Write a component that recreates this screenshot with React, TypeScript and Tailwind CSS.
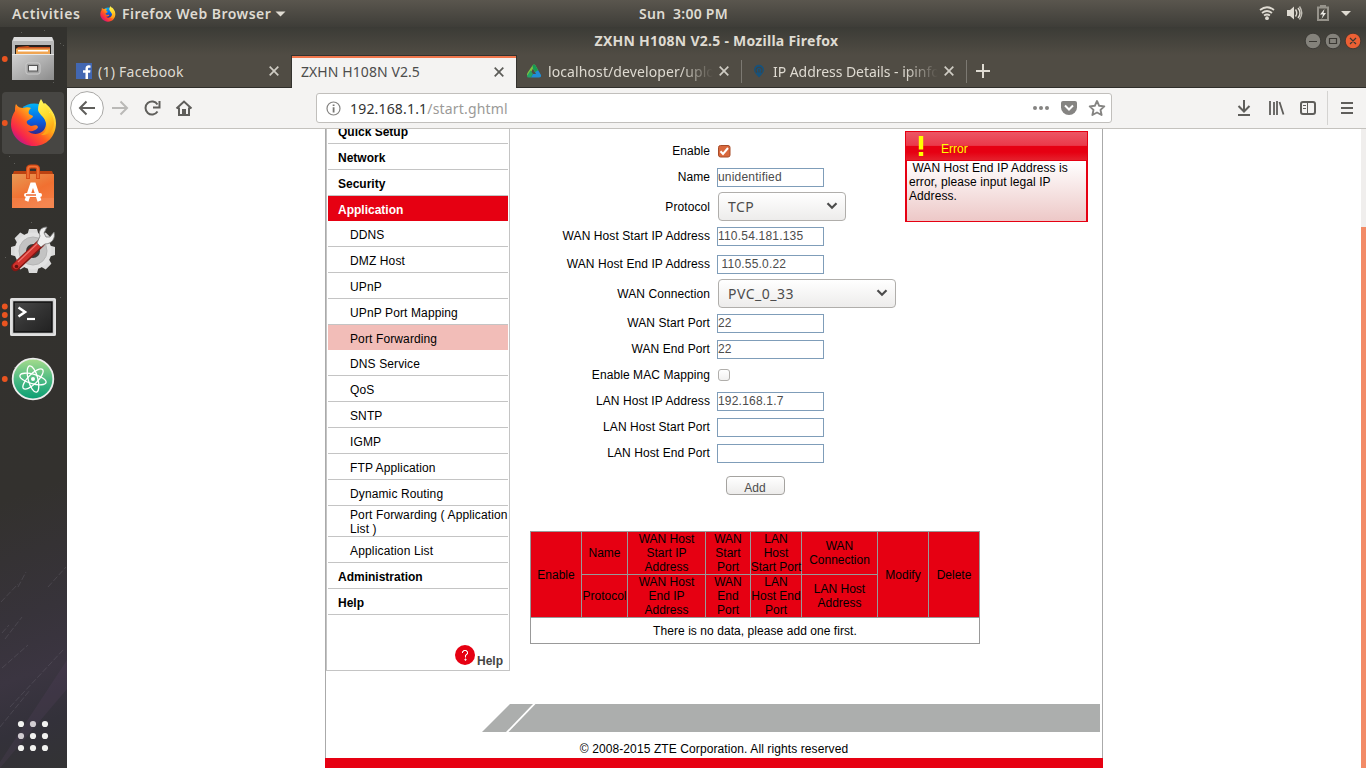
import React from "react";

const UI = "font-['Noto_Sans',sans-serif]";

function Flame() {
  return (
    <>
      <defs>
        <linearGradient id="fxBody" x1="0.9" y1="0.1" x2="0.15" y2="0.9">
          <stop offset="0" stopColor="#fff44f" />
          <stop offset="0.35" stopColor="#ffb018" />
          <stop offset="0.6" stopColor="#ff5a22" />
          <stop offset="0.85" stopColor="#f5234f" />
          <stop offset="1" stopColor="#b8198e" />
        </linearGradient>
        <linearGradient id="fxGlobe" x1="0.5" y1="0" x2="0.5" y2="1">
          <stop offset="0" stopColor="#00b4f8" />
          <stop offset="0.5" stopColor="#0a5fe0" />
          <stop offset="1" stopColor="#3a1673" />
        </linearGradient>
        <linearGradient id="fxTail" x1="0.3" y1="0" x2="0.6" y2="1">
          <stop offset="0" stopColor="#fff65a" />
          <stop offset="0.5" stopColor="#ffd92a" />
          <stop offset="1" stopColor="#ff9a12" />
        </linearGradient>
      </defs>
      <circle cx="23" cy="22" r="17.5" fill="url(#fxGlobe)" />
      <path
        d="M5 5C7 8 9 9 12 9C15 8 18 8 20 9C18 11 17 13 18 15L22 17C22 19 19 20 16 22C15 24 17 26 20 27C24 27 25 25 27 28C26 31 21 33 17 32C22 37 34 36 35 25C35 18 28 14 28 8L34 4C40 9 45 16 45 24C45 37 36 47 23 47C10 47 0 37 0 25C0 19 2 15 4 12C4 9 4 7 5 5Z"
        fill="url(#fxBody)"
      />
      <path
        d="M30 0C28 3 27 7 27 11C28 16 35 18 36 27C36 31 33 35 30 36C38 37 43 30 43 24C43 14 35 10 30 0Z"
        fill="url(#fxTail)"
      />
    </>
  );
}

function Tile({ dots = 0, active = false, children }: { dots?: number; active?: boolean; children: React.ReactNode }) {
  const ys = dots === 3 ? [23.5, 32, 40.5] : dots === 1 ? [32] : [];
  return (
    <svg width="67" height="64" viewBox="0 0 67 64" className="block shrink-0">
      {active && <rect x="2" y="1" width="62" height="62" rx="4" fill="#ffffff" fillOpacity="0.1" />}
      {ys.map((y) => (
        <circle key={y} cx="4.8" cy={y} r="2.9" fill="#e95420" />
      ))}
      {children}
    </svg>
  );
}

function Dock() {
  return (
    <aside className="relative flex w-[67px] shrink-0 flex-col bg-[linear-gradient(160deg,#33322e_0%,#33312e_62%,#37333a_78%,#3b3541_86%,#33313a_93%,#333334_100%)]">
      <svg className="absolute left-0 top-0" width="67" height="741" viewBox="0 0 67 741">
        <g stroke="#7b7680" strokeOpacity="0.28" strokeWidth="1" strokeDasharray="6 2">
          <path d="M5 612L22 590M2 606L9 598M18 560L26 545M2 641L28 618M10 680L64 622" />
          <path d="M1 575L18 557M48 560L66 540M0 700L30 663" />
        </g>
        <path d="M0 735L67 633V662L0 741Z" fill="#5c4666" fillOpacity="0.22" />
        <g fill="#fff" fillOpacity="0.22">
          <path d="M21 5h1v1h-1zM44 3h1v1h-1zM60 16h1v1h-1zM63 18h1v1h-1zM53 55h1v1h-1zM14 136h1v1h-1zM9 129h1v1h-1zM49 85h1v1h-1zM31 195h1v1h-1zM5 230h1v1h-1zM60 270h1v1h-1zM14 340h1v1h-1z" />
        </g>
      </svg>
      <Tile dots={1}>
        <defs>
          <linearGradient id="cab" x1="0" y1="0" x2="1" y2="1">
            <stop offset="0" stopColor="#d2d2d2" />
            <stop offset="0.5" stopColor="#b0b0b0" />
            <stop offset="1" stopColor="#8b8b8b" />
          </linearGradient>
        </defs>
        <path d="M14 10H52L54 14V53H12V14Z" fill="#b9b9b9" />
        <path d="M14 10H52L53 14H13Z" fill="#dcdcdc" />
        <rect x="15" y="18" width="36" height="11" fill="#26221f" />
        <path d="M18 20L28 19L30 20H50V28H17V21Z" fill="#c74e1c" />
        <rect x="16" y="21.500" width="34" height="6" fill="#f0a552" />
        <rect x="18" y="23" width="30" height="1.500" fill="#fff" />
        <path d="M12 27H54V53H12Z" fill="url(#cab)" />
        <path d="M12 27.500H54" stroke="#e8e8e8" />
        <rect x="26" y="36" width="14" height="11" rx="2" fill="#a1a1a1" stroke="#cdcdcd" />
        <rect x="28.500" y="38.500" width="9" height="5.500" fill="#f3f3f3" stroke="#555" />
      </Tile>
      <Tile dots={1} active>
        <g transform="translate(11 8)">
          <Flame />
        </g>
      </Tile>
      <Tile>
        <defs>
          <linearGradient id="bag" x1="0" y1="0" x2="0.6" y2="1">
            <stop offset="0" stopColor="#e79a55" />
            <stop offset="0.6" stopColor="#f17031" />
            <stop offset="1" stopColor="#f57c42" />
          </linearGradient>
        </defs>
        <path d="M14 16H52L54 21H12Z" fill="#bb4211" />
        <path d="M12 19H54V53H12Z" fill="url(#bag)" />
        <path d="M12 43H54V53H12Z" fill="#fff" fillOpacity="0.08" />
        <path d="M28 24V14Q28 11.500 31 11.500H35Q38 11.500 38 14V24" fill="none" stroke="#d64b16" strokeWidth="4" />
        <path d="M28 23V14Q28 11.500 31 11.500H35Q38 11.500 38 14V23" fill="none" stroke="#f07438" strokeWidth="1.600" />
        <path d="M26.500 46L32 29.500H34L39.500 46" fill="none" stroke="#fff" strokeWidth="4" />
        <rect x="24" y="38" width="18" height="4" rx="2" fill="#fff" />
        <path d="M26 40H36" stroke="#ec6a32" strokeWidth="1.500" />
      </Tile>
      <Tile>
        <g transform="translate(33 32)">
          {[0, 45, 90, 135].map((a) => (
            <path key={a} transform={`rotate(${a})`} d="M-4 -22H4L6 -15V15L4 22H-4L-6 15V-15Z" fill="#dadada" />
          ))}
          <circle r="18.500" fill="#e2e2e2" />
          <circle r="14" fill="#c3c3c3" stroke="#b5b5b5" />
          <circle r="7" fill="#3a3937" />
        </g>
        <path d="M15.500 48L41 24" stroke="#821713" strokeWidth="8.500" strokeLinecap="round" />
        <path d="M16 47L41 23.500" stroke="#cf322d" strokeWidth="6.200" strokeLinecap="round" />
        <path d="M18 43L38 24" stroke="#ef7670" strokeWidth="1.200" />
        <circle cx="16.500" cy="47.500" r="1.800" fill="#641310" />
        <path d="M37 24L40 17C38 12 41 8 47 8L44 14L46 18L50 18L54 13C56 20 51 25 45 25L41 28Z" fill="#eee" stroke="#777" strokeWidth="0.800" />
      </Tile>
      <Tile dots={3}>
        <defs>
          <linearGradient id="term" x1="0" y1="0" x2="1" y2="1">
            <stop offset="0" stopColor="#4a4a4a" />
            <stop offset="0.500" stopColor="#333" />
            <stop offset="1" stopColor="#212121" />
          </linearGradient>
        </defs>
        <rect x="10" y="15" width="46" height="38" rx="1.500" fill="#d0d0d0" />
        <rect x="11" y="16" width="44" height="36" rx="1" fill="none" stroke="#efefef" />
        <rect x="14" y="19" width="38" height="30" fill="url(#term)" stroke="#111" strokeWidth="1.500" />
        <path d="M18.500 24.500L25 29L18.500 33.500" fill="none" stroke="#fff" strokeWidth="2.600" />
        <path d="M27 36H35" stroke="#fff" strokeWidth="2.200" />
      </Tile>
      <Tile dots={1}>
        <defs>
          <linearGradient id="atom" x1="0" y1="0" x2="0" y2="1">
            <stop offset="0" stopColor="#a6dc8c" />
            <stop offset="0.550" stopColor="#47b983" />
            <stop offset="1" stopColor="#0a9d72" />
          </linearGradient>
        </defs>
        <circle cx="33" cy="32" r="20.300" fill="url(#atom)" stroke="#ededed" strokeWidth="1.800" />
        <g fill="none" stroke="#fff" strokeWidth="1.300" transform="translate(33 32)">
          <ellipse rx="13.500" ry="4.800" transform="rotate(15)" />
          <ellipse rx="13.500" ry="4.800" transform="rotate(75)" />
          <ellipse rx="13.500" ry="4.800" transform="rotate(135)" />
        </g>
        <circle cx="33" cy="32" r="2" fill="#fff" />
      </Tile>
      <svg className="mb-[15px] ml-[16px] mt-auto block" width="34" height="34" viewBox="0 0 34 34">
        {[5, 17, 29].map((y) => [5, 17, 29].map((x) => <circle key={`${x}-${y}`} cx={x} cy={y} r="3.100" fill="#f2f2f0" />))}
      </svg>
    </aside>
  );
}

function TopBar() {
  return (
    <header className={`${UI} grid h-[27px] shrink-0 grid-cols-[583px_201px_1fr] items-center bg-[linear-gradient(#5a564e,#3e3d38)] text-[14px] font-semibold leading-[27px] text-[#dfdbd2]`}>
      <div className="flex items-center whitespace-nowrap pl-[12px]">
        <span className="w-[88px] tracking-[0.6px]">Activities</span>
        <svg width="16" height="16" viewBox="0 0 46 48" className="mr-[6px]">
          <Flame />
        </svg>
        <span className="w-[153px] tracking-[0.47px]">Firefox Web Browser</span>
        <svg width="11" height="6" viewBox="0 0 11 6"><path d="M0.500 0.500H10.500L5.500 5.500Z" fill="#dfdbd2" /></svg>
      </div>
      <div className="whitespace-pre text-center tracking-[0.25px]">Sun  3:00 PM</div>
      <svg className="justify-self-end" width="114" height="27" viewBox="1252 0 114 27">
        <g fill="none" stroke="#dfdbd2" strokeWidth="1.800">
          <path d="M1260 10Q1267 4.500 1274 10" />
          <path d="M1262 13Q1267 9 1272 13" />
          <path d="M1264 15.500Q1267 13.500 1270 15.500" />
          <path d="M1295.500 9.500Q1298 13 1295.500 16.500M1298 8Q1302 13 1298 18" strokeWidth="1.400" />
          <path d="M1299.500 6.500Q1304 13 1299.500 19.500" strokeOpacity="0.800" strokeWidth="1.400" />
        </g>
        <circle cx="1267" cy="18.200" r="1.900" fill="#dfdbd2" />
        <path d="M1287 10H1290L1294 6.500V19.500L1290 16H1287Z" fill="#dfdbd2" />
        <path d="M1318 7.500H1328V20H1318ZM1321 7V6H1325V7" fill="none" stroke="#96938b" strokeWidth="2" />
        <path d="M1324.500 9L1320 14.500H1323L1321.500 19L1326 13H1323.500Z" fill="#eceae5" />
        <path d="M1341 11H1351L1346 16Z" fill="#dfdbd2" />
      </svg>
    </header>
  );
}

function Close({ dark = false }: { dark?: boolean }) {
  return (
    <svg width="10" height="10" viewBox="0 0 10 10" className="shrink-0">
      <path d="M0.700 0.700L9.300 9.300M9.300 0.700L0.700 9.300" stroke={dark ? "#5c5c58" : "#cfccc4"} strokeWidth="1.700" />
    </svg>
  );
}

function Chrome() {
  return (
    <>
      <div className={`${UI} grid h-[28px] shrink-0 grid-cols-[1fr_300px_1fr] items-center bg-[linear-gradient(#3b3b36,#504c44)] text-[14px] font-bold leading-[28px] text-[#dfdbd2]`}>
        <span />
        <span className="whitespace-nowrap text-center tracking-[0.26px]">ZXHN H108N V2.5 - Mozilla Firefox</span>
        <svg className="justify-self-end" width="64" height="28" viewBox="1302 27 64 28">
          <circle cx="1313" cy="41" r="7.800" fill="#84827b" stroke="#33322e" strokeWidth="0.800" />
          <circle cx="1333" cy="41" r="7.800" fill="#84827b" stroke="#33322e" strokeWidth="0.800" />
          <circle cx="1353" cy="41" r="7.800" fill="#ec6034" stroke="#33322e" strokeWidth="0.800" />
          <path d="M1309 41.500H1317M1329.500 38.500H1336.500V43.500H1329.500ZM1350 38L1356 44M1356 38L1350 44" fill="none" stroke="#3a3833" strokeWidth="1.200" />
        </svg>
      </div>

      <div className={`${UI} flex h-[33px] shrink-0 bg-[#504c44] text-[14px] leading-[33px] text-[#dfdbd2]`}>
        <div className="flex w-[224px] items-center border-b border-[#2f2e2a] pl-[9px] pr-[12px]">
          <svg width="16" height="16" viewBox="0 0 16 16" className="mr-[6px]">
            <rect width="16" height="16" fill="#4267b2" />
            <path d="M9.500 16V9.800H7V7.300H9.500V5.500C9.500 3.200 11 2.300 12.700 2.300L14.500 2.400V4.700H13.300C12.200 4.700 12 5.200 12 6V7.300H14.500L14.100 9.800H12V16Z" fill="#fff" />
          </svg>
          <span className="grow tracking-[0.25px]">(1) Facebook</span>
          <Close />
        </div>
        <div className="flex w-[226px] items-center border-x border-t border-[#33322e] bg-[#f4f3f2] pl-[9px] pr-[12px] leading-[30px] text-[#4c4c4c] shadow-[inset_0_2px_0_#f0764c]">
          <span className="grow tracking-[0.08px]">ZXHN H108N V2.5</span>
          <Close dark />
        </div>
        <div className="flex grow items-center border-b border-[#2f2e2a] pl-[9px]">
          <svg width="16" height="16" viewBox="0 0 16 16" className="mr-[6px] shrink-0">
            <path d="M6.500 2.500Q8 0.500 9.500 2.500L12 7L9 9L7 5.500L4 11L1 13Q0.500 11 2 9Z" fill="#7bc243" />
            <path d="M1 13L4.500 7.500L7 11L5 14.500H2.500Q1 14.500 1 13Z" fill="#23a566" />
            <path d="M9 9L12 7L15 12Q15.500 14.500 13 14.500H5L7 11H10Z" fill="#1f8dd6" />
            <path d="M6.500 2.500Q8 0.500 9.500 2.500L12 7L9 9L7 5.500Z" fill="#159b55" />
          </svg>
          <span className="w-[166px] overflow-hidden whitespace-nowrap tracking-[0.1px] [mask-image:linear-gradient(to_right,#000_132px,transparent_165px)]">localhost/developer/upload</span>
          <span className="ml-[5px] flex"><Close /></span>
          <span className="ml-[12px] h-[23px] w-px bg-[#7c7972]" />
          <svg width="12" height="14" viewBox="0 0 12 14" className="ml-[11px] mr-[8px] shrink-0">
            <path d="M6 13.500C3 10 1 8.500 1 5.800A5 5 0 0 1 11 5.800C11 8.500 9 10 6 13.500Z" fill="#16527c" />
            <path d="M4 8.500A3 3 0 1 1 8 8.500M6 5V8.500" fill="none" stroke="#45433d" strokeWidth="1.200" />
          </svg>
          <span className="w-[165px] overflow-hidden whitespace-nowrap tracking-[-0.05px] [mask-image:linear-gradient(to_right,#000_132px,transparent_165px)]">IP Address Details - ipinfo</span>
          <span className="ml-[6px] flex"><Close /></span>
          <span className="ml-[12px] h-[23px] w-px bg-[#7c7972]" />
          <svg width="14" height="14" viewBox="0 0 14 14" className="ml-[9px]"><path d="M7 0V14M0 7H14" stroke="#dfdbd2" strokeWidth="2" /></svg>
        </div>
      </div>

      <div className="flex h-[41px] shrink-0 items-start border-b border-[#c4c2be] bg-[#f4f3f2] pt-[3px]">
        <svg width="240" height="34" viewBox="67 91 240 34" className="mr-[9px] shrink-0" fill="none" stroke="#5f5e5b" strokeWidth="2">
          <circle cx="87" cy="108" r="16.400" fill="#fff" stroke="#a9a8a6" strokeWidth="1" />
          <path d="M95 108H80M86.500 101.500L80 108L86.500 114.500" />
          <path d="M112 108H127M120.500 101.500L127 108L120.500 114.500" stroke="#bab9b7" />
          <path d="M157.500 104.500A6.500 6.500 0 1 0 157.500 111.500" />
          <path d="M159.500 101V107.500H153" fill="none" />
          <path d="M176.500 108.500L184 101.500L191.500 108.500M179 107.500V115H189V107.500M183 115V110H185V115" />
        </svg>
        <div className={`${UI} mt-[2px] flex h-[30px] w-[796px] shrink-0 items-center rounded-[3px] border border-[#c1bfbc] bg-white pl-[9px] text-[14px] leading-[28px] text-[#9b9a98]`}>
          <svg width="15" height="15" viewBox="0 0 15 15" className="mr-[9px]">
            <circle cx="7.500" cy="7.500" r="6.500" fill="none" stroke="#858482" strokeWidth="1.200" />
            <path d="M6.700 3.500H8.500V5H6.700ZM6.700 6.300H8.500V11.500H6.700Z" fill="#777673" />
          </svg>
          <span className="grow pt-px tracking-[0.18px]"><span className="text-[#333]">192.168.1.1</span>/start.ghtml</span>
          <svg width="83" height="20" viewBox="1028 98 83 20">
            <g fill="#858482"><circle cx="1035" cy="108" r="2" /><circle cx="1041" cy="108" r="2" /><circle cx="1047" cy="108" r="2" /></g>
            <path d="M1063 101H1075Q1077 101 1077 103V107.500A8 7.500 0 0 1 1061 107.500V103Q1061 101 1063 101Z" fill="#858482" />
            <path d="M1065 105.500L1069 109.500L1073 105.500" fill="none" stroke="#fff" strokeWidth="2" />
            <path d="M1097 101L1099.200 105.800L1104.300 106.400L1100.500 109.900L1101.600 115L1097 112.500L1092.400 115L1093.500 109.900L1089.700 106.400L1094.800 105.800Z" fill="none" stroke="#858482" strokeWidth="1.900" strokeLinejoin="round" />
          </svg>
        </div>
        <svg className="ml-auto" width="136" height="34" viewBox="1230 91 136 34" fill="none" stroke="#5f5e5b" strokeWidth="2">
          <path d="M1244 100V111.500M1238.500 106L1244 111.500L1249.500 106M1238 115H1250" />
          <path d="M1270 101V115M1274 102V115M1277 101V115M1279.500 102L1283.500 114.500" strokeWidth="1.800" />
          <rect x="1301" y="102" width="14" height="12" rx="2" />
          <path d="M1307.500 102V114" strokeWidth="1" />
          <path d="M1303 105.500H1306M1303 108.500H1306" strokeWidth="1" />
          <path d="M1327.500 91V125" stroke="#d4d3d1" strokeWidth="1" />
          <path d="M1341 103H1353M1341 108H1353M1341 113H1353" />
        </svg>
      </div>
    </>
  );
}

const subTop = ["DDNS", "DMZ Host", "UPnP", "UPnP Port Mapping", "Port Forwarding", "DNS Service", "QoS", "SNTP", "IGMP", "FTP Application", "Dynamic Routing"];

function MainItem({ label }: { label: string }) {
  return <div className="h-[26px] border-b border-[#c4c4c4] pl-[10px] pt-[7px] font-bold">{label}</div>;
}

function Menu() {
  return (
    <nav className="flex h-[542px] w-[184px] shrink-0 flex-col border-x border-b border-[#c4c4c4] px-px">
      <div className="flex h-[15px] flex-col justify-end overflow-hidden">
        <div className="shrink-0"><MainItem label="Quick Setup" /></div>
      </div>
      <MainItem label="Network" />
      <MainItem label="Security" />
      <div className="h-[25px] bg-[#e60012] pl-[10px] pt-[7px] font-bold text-white">Application</div>
      {subTop.map((s) =>
        s === "Port Forwarding" ? (
          <div key={s} className="h-[25px] bg-[#f2bdb8] pl-[22px] pt-[7px] tracking-[0.12px]">{s}</div>
        ) : (
          <div key={s} className="h-[26px] border-b border-[#c4c4c4] pl-[22px] pt-[7px] tracking-[0.12px]">{s}</div>
        ),
      )}
      <div className="h-[31px] whitespace-nowrap border-b border-[#c4c4c4] pl-[22px] pt-[2px] tracking-[0.12px]">Port Forwarding ( Application<br />List )</div>
      <div className="h-[26px] border-b border-[#c4c4c4] pl-[22px] pt-[7px] tracking-[0.16px]">Application List</div>
      <MainItem label="Administration" />
      <MainItem label="Help" />
      <div className="mt-[30px] flex justify-end pr-[5px]">
        <svg width="20" height="20" viewBox="0 0 20 20" className="mr-[2px]">
          <circle cx="10" cy="10" r="10" fill="#e60012" />
          <path d="M7.500 8V6.500H8.500V5.500H11.500V6.500H12.500V9H11.500V10H10.500V12.500M10 14H11V15.200H10Z" fill="none" stroke="#fff" strokeWidth="1" />
        </svg>
        <span className="mt-[9px] font-bold text-[#444]">Help</span>
      </div>
    </nav>
  );
}

function Row({ label, h = "h-[26px]", top = "pt-[6px]", children }: { label: string; h?: string; top?: string; children: React.ReactNode }) {
  return (
    <div className={`flex items-start ${h}`}>
      <label className={`w-[200px] whitespace-nowrap text-right tracking-[0.08px] ${top}`}>{label}</label>
      {children}
    </div>
  );
}

function Field({ value = "" }: { value?: string }) {
  return <div className="ml-[7px] mt-[4px] h-[19px] w-[107px] whitespace-pre border border-[#7f9db9] bg-white pt-px tracking-[0.2px] text-[#4c4c4c]">{value}</div>;
}

function Picker({ value, className }: { value: string; className: string }) {
  return (
    <div className={`${UI} ml-[8px] flex h-[29px] items-center justify-between rounded-[4px] border border-[#b0aeab] bg-[linear-gradient(#ffffff,#edeceb)] pl-[9px] pr-[7px] text-[14px] leading-[27px] tracking-[0.5px] text-[#4c4c4c] ${className}`}>
      <span>{value}</span>
      <svg width="12" height="8" viewBox="0 0 12 8" className="mb-[2px]"><path d="M1.500 1.200L6 5.700L10.500 1.200" fill="none" stroke="#4c4c4c" strokeWidth="2.200" /></svg>
    </div>
  );
}

function Form() {
  return (
    <form className="mt-[9px] w-[395px]">
      <Row label="Enable">
        <svg width="13" height="13" viewBox="0 0 13 13" className="ml-[8px] mt-[7px]">
          <rect x="0.500" y="0.500" width="11.500" height="11.500" rx="2" fill="#d9683c" stroke="#a74c29" />
          <path d="M2.500 6.300L5 9L10 3" fill="none" stroke="#fff" strokeWidth="2" />
        </svg>
      </Row>
      <Row label="Name"><Field value="unidentified" /></Row>
      <Row label="Protocol" h="h-[33px]" top="pt-[10px]"><Picker value="TCP" className="mt-[2px] w-[128px]" /></Row>
      <Row label="WAN Host Start IP Address" h="h-[28px]"><Field value="110.54.181.135" /></Row>
      <Row label="WAN Host End IP Address" h="h-[27px]"><Field value=" 110.55.0.22" /></Row>
      <Row label="WAN Connection" h="h-[32px]" top="pt-[9px]"><Picker value="PVC_0_33" className="mt-[1px] w-[178px]" /></Row>
      <Row label="WAN Start Port"><Field value="22" /></Row>
      <Row label="WAN End Port"><Field value="22" /></Row>
      <Row label="Enable MAC Mapping">
        <span className="ml-[8px] mt-[7px] h-[12px] w-[12px] rounded-[3px] border border-[#b0aeab] bg-[linear-gradient(#ffffff,#f2f1f0)]" />
      </Row>
      <Row label="LAN Host IP Address"><Field value="192.168.1.7" /></Row>
      <Row label="LAN Host Start Port"><Field /></Row>
      <Row label="LAN Host End Port"><Field /></Row>
      <div className="ml-[216px] mt-[10px] h-[19px] w-[59px] overflow-hidden rounded-[4px] border border-[#a5a3a0] bg-[linear-gradient(#ffffff,#edeceb)] pr-px pt-[4px] text-center text-[#4c4c4c]">Add</div>
    </form>
  );
}

function Head({ lines, className = "" }: { lines: string[]; className?: string }) {
  return (
    <div className={`flex flex-col items-center justify-center whitespace-nowrap bg-[#e60012] text-center ${className}`}>
      {lines.map((l) => <span key={l}>{l}</span>)}
    </div>
  );
}

function Rules() {
  return (
    <div className="ml-[20px] mt-[36px] grid w-[450px] grid-cols-[50px_45px_77px_44px_50px_75px_50px_50px] grid-rows-[42px_42px_25px] gap-px bg-[#999] p-px">
      <Head lines={["Enable"]} className="row-span-2" />
      <Head lines={["Name"]} />
      <Head lines={["WAN Host", "Start IP", "Address"]} />
      <Head lines={["WAN", "Start", "Port"]} />
      <Head lines={["LAN", "Host", "Start Port"]} />
      <Head lines={["WAN", "Connection"]} />
      <Head lines={["Modify"]} className="row-span-2" />
      <Head lines={["Delete"]} className="row-span-2" />
      <Head lines={["Protocol"]} />
      <Head lines={["WAN Host", "End IP", "Address"]} />
      <Head lines={["WAN", "End", "Port"]} />
      <Head lines={["LAN", "Host End", "Port"]} />
      <Head lines={["LAN Host", "Address"]} />
      <div className="col-span-8 bg-white pt-[6px] text-center tracking-[0.06px]">There is no data, please add one first.</div>
    </div>
  );
}

function ErrorBox() {
  return (
    <section className="mt-[2px] h-[91px] w-[183px] shrink-0 border border-[#e60012]">
      <div className="flex h-[28px] items-start bg-[linear-gradient(#ec5664_0%,#ea3a4a_48%,#e60012_50%,#e60012_72%,#e5202c_100%)] text-[#ffff00]">
        <svg width="6" height="20" viewBox="0 0 6 20" className="ml-[12px] mt-[4px]"><path d="M0.800 0H5.200V13.500H0.800ZM0.800 16H5.200V20H0.800Z" fill="#ffff00" /></svg>
        <span className="ml-[17px] mt-[10px]">Error</span>
      </div>
      <div className="h-[61px] whitespace-pre border-x border-t border-[#e60012] bg-[linear-gradient(#ffffff,#edc8c7)] pl-[2px] tracking-[0.08px]">{" WAN Host End IP Address is\nerror, please input legal IP\nAddress."}</div>
    </section>
  );
}

export default function App() {
  return (
    <div className="flex h-[768px] w-[1366px] flex-col overflow-hidden bg-white">
      <TopBar />
      <div className="flex min-h-0 grow">
        <Dock />
        <div className="flex min-w-0 grow flex-col">
          <Chrome />
          <div className="flex min-h-0 grow font-['Liberation_Sans',Arial,sans-serif] text-[12px] leading-[14px] text-black">
            <main className="ml-[258px] flex w-[778px] shrink-0 flex-col border-x border-[#aaa]">
              <div className="flex">
                <Menu />
                <div>
                  <div className="flex">
                    <Form />
                    <ErrorBox />
                  </div>
                  <Rules />
                </div>
              </div>
              <svg width="618" height="28" viewBox="0 0 618 28" className="ml-[156px] mt-[33px] block shrink-0">
                <path d="M28 0H51L24 28H0Z" fill="#acaead" />
                <path d="M53.500 0H618V28H26.500Z" fill="#acaead" />
              </svg>
              <p className="mt-[10px] text-center tracking-[0.1px]">© 2008-2015 ZTE Corporation. All rights reserved</p>
              <div className="-mx-px mt-auto h-[10px] shrink-0 bg-[#e60012]" />
            </main>
            <div className="ml-auto w-[5px] bg-[#f0eeed] pt-[98px]">
              <div className="h-full bg-[#f28b67]" />
            </div>
          </div>
        </div>
      </div>
    </div>
  );
}
